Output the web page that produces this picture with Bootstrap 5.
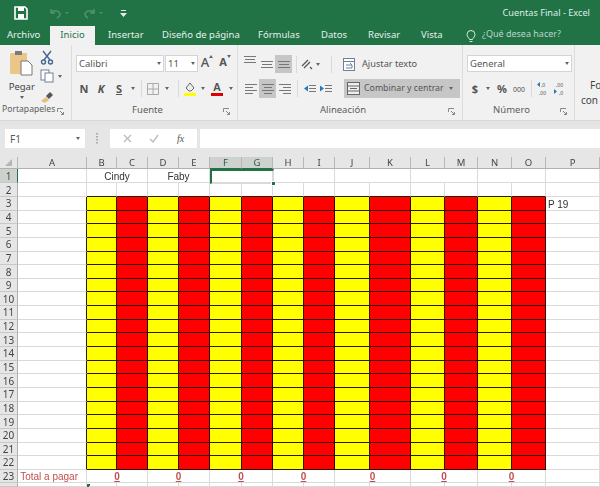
<!DOCTYPE html>
<html lang="es">
<head>
<meta charset="utf-8">
<title>Cuentas Final - Excel</title>
<link href="https://cdn.jsdelivr.net/npm/bootstrap@5.3.0/dist/css/bootstrap.min.css" rel="stylesheet">
<style>
html,body{height:487px;overflow:hidden;margin:0}
body{background:#fff;font:9.5px/1.2 "Noto Sans",sans-serif;color:#444;width:600px;filter:blur(.35px)}
svg{display:block;flex:none}
.titlebar{height:26px;background:#217346;color:#e4efe9;padding-left:14px}
.qat{width:34px}.qat2{width:38px}
.doc-title{margin-left:auto;margin-right:10px;font-size:9.2px;color:#dfeee6}
.tabs{height:19px;background:#217346;color:#e6f1eb}
.tabitem{padding-top:3px;white-space:nowrap}
.tab-file{margin-left:7px;width:43px}
.tab-on{width:45px;height:19px;background:#f1f1f1;color:#217346;text-align:center}
.tab-b{margin-left:13px;width:54px}.tab-c{width:96px}.tab-d{width:63px}.tab-e{width:47px}.tab-f{width:53px}.tab-g{width:37px}
.tell{color:#b9d6c6;margin-left:6px;font-size:9px}
.ribbon{height:75px;background:#f1f1f1;overflow:hidden}
.grp{height:75px;border-right:1px solid #dcdcdc;padding-top:10px;position:relative}
.g1{width:72px;padding-top:5px}.g2{width:166px;padding-left:4px}.g3{width:225px;padding-left:4px}.g4{width:112px;padding-left:4px}.g5{width:25px;padding-top:33px;padding-left:6px;border:0;font-size:10px;line-height:15px;white-space:nowrap;overflow:hidden}
.foc{padding-left:9px}
.grplabel{position:absolute;left:0;right:0;bottom:2px;height:14px;color:#5c5c5c;padding:0 3px 0 0}
.grplabel span:first-child{flex:1;text-align:center}
.g1 .grplabel{font-size:8.6px}
.g1 .grplabel span:first-child{text-align:left;padding-left:2px}
.rr{height:18px}.rr2{height:19px;margin-top:6px}
.sel{height:17px;background:#fff;border:1px solid #d4d4d4;padding:0 2px;font-size:9.5px;color:#555;justify-content:space-between}
.s88{width:88px}.s33{width:33px;margin-left:1px}.s105{width:105px}
.sl{justify-content:center;height:100%;flex:none}
.w5{width:5px}.w9{width:9px}.w10{width:10px}.w12{width:12px}.w14{width:14px}.w15{width:15px}.w16{width:16px}.w17{width:17px}.w18{width:18px}.w20{width:20px}.w22{width:22px}
.active{background:#c6c6c6}
.vsep{width:1px;height:17px;background:#dadada;margin:0 4px;flex:none}
.ff{font-weight:700;font-size:11px;color:#555}
.ab{font-size:13px;font-weight:500}
.merge{width:116px;background:#c6c6c6;padding:0 3px;margin-left:9px;color:#555;font-size:8.8px;white-space:nowrap}
.wrap{margin-left:7px;color:#555;font-size:9.2px}
.car{width:0;height:0;border:2.5px solid transparent;border-top:3px solid #666;border-bottom:0;flex:none}
.band{height:5px;background:#e4e4e4;border-top:1px solid #d8d8d8}
.fbar{height:32px;background:#e6e6e6;padding:4px 0 0 5px;align-items:flex-start}
.fbox{height:19px;background:#fff;font-size:10px;color:#555}
.namebox{width:80px;padding:0 5px;justify-content:space-between}
.dots{width:25px;justify-content:center}
.fxbox{width:87px;margin-right:3px;justify-content:space-around;padding:0 4px}
.formula{flex:1}
.fxt{font:italic 10px "Liberation Serif",serif;color:#555}
.sheet{display:grid;grid-template-columns:18px 69px 30px 31px 31px 31px 32px 31px 31px 31px 35px 41px 34px 33px 34px 34px 54px;grid-template-rows:12px 14px 14px repeat(20,13.65px) 13px 4px;font:10px/1 "Liberation Sans",sans-serif;color:#333;position:relative;height:330px}
.sheet>div{border-right:1px solid #dadada;border-bottom:1px solid #dadada;display:flex;align-items:flex-end;justify-content:center;white-space:nowrap;overflow:visible;min-width:0}
.sheet>.hc{background:#e6e6e6;border-right-color:#b8b8b8;border-bottom-color:#b0b0b0;color:#444;font-family:"Noto Sans",sans-serif;font-size:9.5px;align-items:center}
.sheet>.rn{background:#e6e6e6;border-right-color:#b0b0b0;border-bottom-color:#c8c8c8;color:#444;font-family:"Noto Sans",sans-serif;align-items:center}
.sheet>.hon{background:#cdd2ce;border-bottom:1px solid #217346;color:#2b5c40}
.sheet>.ron{background:#cdd2ce;border-right:1px solid #217346;color:#2b5c40}
.sheet>.yy,.sheet>.red{border-color:#2a1c00}
.sheet>.yy{background:#ff0}.sheet>.red{background:#f00;border-color:#300}
.sheet>.tb{border-bottom-color:#2a1c00}
.sheet>.lb{border-right-color:#2a1c00}
.sheet>.tl{color:#c0504d;justify-content:flex-end;padding-right:8px}
.sheet>.pp{justify-content:flex-start;padding-left:2px}
.zero{color:#c0504d;font-weight:700;text-decoration:underline}
.span2{grid-column:span 2}
.pick{position:absolute;left:210px;top:12px;width:64px;height:15px;border:2px solid #217346;pointer-events:none}
.pick i{position:absolute;right:-3px;bottom:-3px;width:5px;height:5px;background:#217346;border:1px solid #fff}
.mk{position:absolute;left:87px;top:327px;width:3px;height:3px;border-left:2px solid #217346;border-top:2px solid #217346}
.corner{width:0;height:0;border:0 solid transparent;border-right:7px solid #b5b5b5;border-top:7px solid transparent}
</style>
</head>
<body>
<div class="titlebar d-flex align-items-center">
  <div class="qat"><svg width="14" height="14" viewBox="0 0 14 14"><path d="M1 1h10l2 2v10H1z" fill="none" stroke="#fff" stroke-width="1.6"/><rect x="4" y="1" width="6" height="4" fill="#fff"/><rect x="4" y="8" width="6" height="5" fill="#fff"/></svg></div>
  <div class="qat"><svg width="22" height="12" viewBox="0 0 22 12" fill="none" stroke="#4f9270" stroke-width="1.5"><path d="M3 2v4h4M3 6c2-3 8-3 9 1 0 2-1 3-3 4"/><path d="M17 5l2 2 2-2" fill="#4f9270" stroke="none"/></svg></div>
  <div class="qat2"><svg width="22" height="12" viewBox="0 0 22 12" fill="none" stroke="#4f9270" stroke-width="1.5"><path d="M12 2v4H8M12 6c-2-3-8-3-9 1 0 2 1 3 3 4"/><path d="M17 5l2 2 2-2" fill="#4f9270" stroke="none"/></svg></div>
  <svg width="7" height="7" viewBox="0 0 7 7"><rect x="1" y="0" width="5" height="1" fill="#e4efe9"/><path d="M0 3h7L3.500 7z" fill="#e4efe9"/></svg>
  <span class="doc-title">Cuentas Final - Excel</span>
</div>
<nav class="tabs d-flex">
  <span class="tabitem tab-file">Archivo</span>
  <span class="tabitem tab-on">Inicio</span>
  <span class="tabitem tab-b">Insertar</span>
  <span class="tabitem tab-c">Diseño de página</span>
  <span class="tabitem tab-d">Fórmulas</span>
  <span class="tabitem tab-e">Datos</span>
  <span class="tabitem tab-f">Revisar</span>
  <span class="tabitem tab-g">Vista</span>
  <svg class="mt-1 ms-2" width="10" height="13" viewBox="0 0 10 13" fill="none" stroke="#d6e8de"><path d="M3.500 9.500C3 7.500 1 7 1 4.500a4 4 0 0 1 8 0C9 7 7 7.500 6.500 9.500zM3.500 11.500h3"/></svg>
  <span class="tabitem tell">¿Qué desea hacer?</span>
</nav>
<section class="ribbon d-flex">
  <div class="grp g1 d-flex">
    <div class="d-flex flex-column align-items-center ms-1 w-50">
      <svg width="25" height="27" viewBox="0 0 25 27"><rect x="1" y="3" width="17" height="21" rx="1" fill="#eac688"/><rect x="6" y="1" width="7" height="4" fill="#7a7a7a"/><path d="M12 11h7l4 4v10H12z" fill="#fff" stroke="#777"/></svg>
      <span class="mt-1">Pegar</span>
      <div class="car mt-1"></div>
    </div>
    <div class="d-flex flex-column">
      <svg width="14" height="15" viewBox="0 0 14 15" fill="none" stroke="#44678f" stroke-width="1.4"><path d="M3 1l7 9M11 1L4 10"/><circle cx="3.500" cy="12" r="2"/><circle cx="10.500" cy="12" r="2"/></svg>
      <div class="d-flex align-items-center mt-1"><svg width="14" height="14" viewBox="0 0 14 14" fill="#fff" stroke="#6d8299"><rect x="1" y="1" width="8" height="10"/><rect x="5" y="4" width="8" height="9"/></svg><div class="car ms-1"></div></div>
      <svg class="mt-2" width="14" height="12" viewBox="0 0 14 12"><path d="M1 10l5-4 3 3-4 3z" fill="#e5bf7c"/><path d="M6 5l4-4 3 3-4 4z" fill="#555"/></svg>
    </div>
    <div class="grplabel d-flex"><span>Portapapeles</span><span><svg class="mt-1 me-1" width="7" height="7" viewBox="0 0 7 7" fill="none" stroke="#888"><path d="M.5 4V.5H6M3 3l3.500 3.500M4 6.500h2.500V4"/></svg></span></div>
  </div>
  <div class="grp g2">
    <div class="rr d-flex align-items-start">
      <div class="sel s88 d-flex align-items-center"><span>Calibri</span><div class="car"></div></div>
      <div class="sel s33 d-flex align-items-center"><span>11</span><div class="car"></div></div>
      <div class="sl d-flex w18 ff ab">A<svg width="4" height="3" viewBox="0 0 4 3"><path d="M0 3l2-3 2 3z" fill="#666"/></svg></div>
      <div class="sl d-flex w18 ff">A<svg width="4" height="3" viewBox="0 0 4 3"><path d="M0 0l2 3 2-3z" fill="#666"/></svg></div>
    </div>
    <div class="rr2 d-flex align-items-center">
      <div class="sl d-flex align-items-center w16 ff">N</div>
      <div class="sl d-flex align-items-center w18 ff fst-italic">K</div>
      <div class="sl d-flex align-items-center w18 ff text-decoration-underline">S</div>
      <div class="sl d-flex align-items-center w9"><div class="car"></div></div>
      <div class="vsep"></div>
      <div class="sl d-flex align-items-center w14"><svg width="12" height="12" viewBox="0 0 12 12" fill="none" stroke="#aaa"><path d="M.5.500h11v11H.5zM6 .500v11M.5 6h11"/></svg></div>
      <div class="sl d-flex align-items-center w14"><div class="car"></div></div>
      <div class="vsep"></div>
      <div class="sl d-flex align-items-center w14"><svg width="14" height="15" viewBox="0 0 14 15"><path d="M3 7l4-5 4 5-3 3H6z" fill="#eee" stroke="#666"/><rect x="1" y="12" width="12" height="3" fill="#ff0"/></svg></div>
      <div class="sl d-flex align-items-center w12"><div class="car"></div></div>
      <div class="sl d-flex align-items-center w15"><svg width="14" height="15" viewBox="0 0 14 15"><rect x="1" y="12" width="12" height="3" fill="#d00"/><text x="7" y="10" text-anchor="middle" font-size="11" font-weight="700" fill="#555" font-family="Liberation Sans">A</text></svg></div>
      <div class="sl d-flex align-items-center w14"><div class="car"></div></div>
    </div>
    <div class="grplabel d-flex"><span>Fuente</span><span><svg class="mt-1 me-1" width="7" height="7" viewBox="0 0 7 7" fill="none" stroke="#888"><path d="M.5 4V.5H6M3 3l3.500 3.500M4 6.500h2.500V4"/></svg></span></div>
  </div>
  <div class="grp g3">
    <div class="rr d-flex align-items-center">
      <div class="sl d-flex w16 align-items-start"><svg width="12" height="9" viewBox="0 0 12 9" stroke="#777"><path d="M0 1.500h12M1 4.500h10M0 7.500h12"/></svg></div>
      <div class="sl d-flex w17 align-items-center"><svg width="12" height="9" viewBox="0 0 12 9" stroke="#777"><path d="M0 1.500h12M1 4.500h10M0 7.500h12"/></svg></div>
      <div class="sl d-flex w17 active align-items-end pb-1"><svg width="12" height="9" viewBox="0 0 12 9" stroke="#777"><path d="M0 1.500h12M1 4.500h10M0 7.500h12"/></svg></div>
      <div class="vsep"></div>
      <div class="sl d-flex w12 align-items-center"><svg width="12" height="12" viewBox="0 0 12 12" fill="none" stroke="#556" stroke-width="1.300"><path d="M1 8l6-6M3 10l6-6M9 9l2 2"/></svg></div>
      <div class="sl d-flex w10 align-items-center"><div class="car"></div></div>
      <div class="vsep ms-2"></div>
      <div class="wrap d-flex align-items-center gap-1"><svg width="15" height="13" viewBox="0 0 15 13" fill="#fff" stroke="#6d8299"><rect x=".5" y=".5" width="11" height="12"/><path d="M.5 3.500h11M3 7h6l-2-2M9 7v3H3" fill="none"/></svg><span>Ajustar texto</span></div>
    </div>
    <div class="rr2 d-flex align-items-center">
      <div class="sl d-flex w17 align-items-center"><svg width="12" height="11" viewBox="0 0 12 11" stroke="#777"><path d="M0 1.500h12M0 4.500h8M0 7.500h12M0 10.500h8"/></svg></div>
      <div class="sl d-flex w17 active align-items-center"><svg width="12" height="11" viewBox="0 0 12 11" stroke="#777"><path d="M0 1.500h12M2 4.500h8M0 7.500h12M2 10.500h8"/></svg></div>
      <div class="sl d-flex w17 align-items-center"><svg width="12" height="11" viewBox="0 0 12 11" stroke="#777"><path d="M0 1.500h12M4 4.500h8M0 7.500h12M4 10.500h8"/></svg></div>
      <div class="vsep"></div>
      <div class="sl d-flex w15 align-items-center"><svg width="12" height="10" viewBox="0 0 12 10" stroke="#777"><path d="M5 1.500h7M5 4.500h7M5 7.500h7"/><path d="M0 4.500l4-3v6z" fill="#2a7ab8" stroke="none"/></svg></div>
      <div class="sl d-flex w18 align-items-center"><svg width="12" height="10" viewBox="0 0 12 10" stroke="#777"><path d="M5 1.500h7M5 4.500h7M5 7.500h7"/><path d="M4 4.500l-4-3v6z" fill="#2a7ab8" stroke="none"/></svg></div>
      <div class="merge d-flex align-items-center h-100 gap-1"><svg width="13" height="13" viewBox="0 0 13 13" fill="#eee" stroke="#666"><rect x=".5" y=".5" width="12" height="12"/><path d="M.5 4h12M.5 9h12M3 6.500h7"/></svg><span class="flex-grow-1">Combinar y centrar</span><div class="car me-1"></div></div>
    </div>
    <div class="grplabel d-flex"><span>Alineación</span><span><svg class="mt-1 me-1" width="7" height="7" viewBox="0 0 7 7" fill="none" stroke="#888"><path d="M.5 4V.5H6M3 3l3.500 3.500M4 6.500h2.500V4"/></svg></span></div>
  </div>
  <div class="grp g4">
    <div class="rr d-flex align-items-start"><div class="sel s105 d-flex align-items-center"><span>General</span><div class="car"></div></div></div>
    <div class="rr2 d-flex align-items-center">
      <div class="sl d-flex w16 align-items-center ff">$</div>
      <div class="sl d-flex w10 align-items-center"><div class="car"></div></div>
      <div class="sl d-flex w18 align-items-center ff">%</div>
      <div class="sl d-flex w16 align-items-center"><svg width="14" height="8" viewBox="0 0 14 8"><text x="7" y="7" text-anchor="middle" font-size="7" fill="#555" font-family="Noto Sans">000</text></svg></div>
      <div class="vsep"></div>
      <div class="sl d-flex w16 align-items-center"><svg width="14" height="15" viewBox="0 0 14 15"><path d="M0 3.500l3-2.500v5z" fill="#2a7ab8"/><text x="4" y="6" font-size="5" fill="#555" font-family="Noto Sans">,0</text><text x="2" y="14" font-size="5" fill="#555" font-family="Noto Sans">,00</text></svg></div>
      <div class="sl d-flex w18 align-items-center"><svg width="14" height="15" viewBox="0 0 14 15"><path d="M3 10.500l-3-2.500v5z" fill="#2a7ab8"/><text x="2" y="6" font-size="5" fill="#555" font-family="Noto Sans">,00</text><text x="5" y="14" font-size="5" fill="#555" font-family="Noto Sans">,0</text></svg></div>
    </div>
    <div class="grplabel d-flex"><span>Número</span><span><svg class="mt-1 me-1" width="7" height="7" viewBox="0 0 7 7" fill="none" stroke="#888"><path d="M.5 4V.5H6M3 3l3.500 3.500M4 6.500h2.500V4"/></svg></span></div>
  </div>
  <div class="grp g5"><span class="foc">Fo</span><br>con</div>
</section>
<div class="band"></div>
<div class="fbar d-flex">
  <div class="fbox namebox d-flex align-items-center"><span>F1</span><div class="car"></div></div>
  <div class="dots d-flex align-items-center fbox bg-transparent"><svg width="3" height="11" viewBox="0 0 3 11" fill="#aaa"><rect width="2" height="1.500" y="0"/><rect width="2" height="1.500" y="3"/><rect width="2" height="1.500" y="6"/><rect width="2" height="1.500" y="9"/></svg></div>
  <div class="fbox fxbox d-flex align-items-center">
    <svg width="9" height="9" viewBox="0 0 9 9" stroke="#bbb" stroke-width="1.300"><path d="M1 1l7 7M8 1L1 8"/></svg>
    <svg width="10" height="9" viewBox="0 0 10 9" fill="none" stroke="#bbb" stroke-width="1.300"><path d="M1 5l3 3 5-7"/></svg>
    <span class="fxt">fx</span>
  </div>
  <div class="fbox formula"></div>
</div>
<main class="sheet" id="sheet"></main>
<script>
var s=document.getElementById('sheet'),h='';
var L='ABCDEFGHIJKLMNOP'.split('');
function c(cl,t){h+='<div class="'+cl+'">'+(t||'')+'</div>';}
c('hc','<span class="corner"></span>');
L.forEach(function(l){c('hc'+(l=='F'||l=='G'?' hon':''),l);});
c('rn ron','1');c('','');c('span2','Cindy');c('span2','Faby');c('span2','');c('span2','');c('span2','');c('span2','');c('span2','');c('','');
c('rn','2');c('','');for(var i=0;i<14;i++)c('tb','');c('','');
for(var r=3;r<=22;r++){c('rn',r);c('lb','');for(i=0;i<14;i++)c(i%2?'red':'yy','');
 c('pp',r==3?'P 19':'');}
c('rn','23');c('tl','Total a pagar');for(i=0;i<7;i++)c('span2','<span class="zero">0</span>');c('','');
c('rn','');for(i=0;i<16;i++)c('','');
s.innerHTML=h+'<div class="pick"><i></i></div><span class="mk"></span>';
</script>
</body>
</html>
